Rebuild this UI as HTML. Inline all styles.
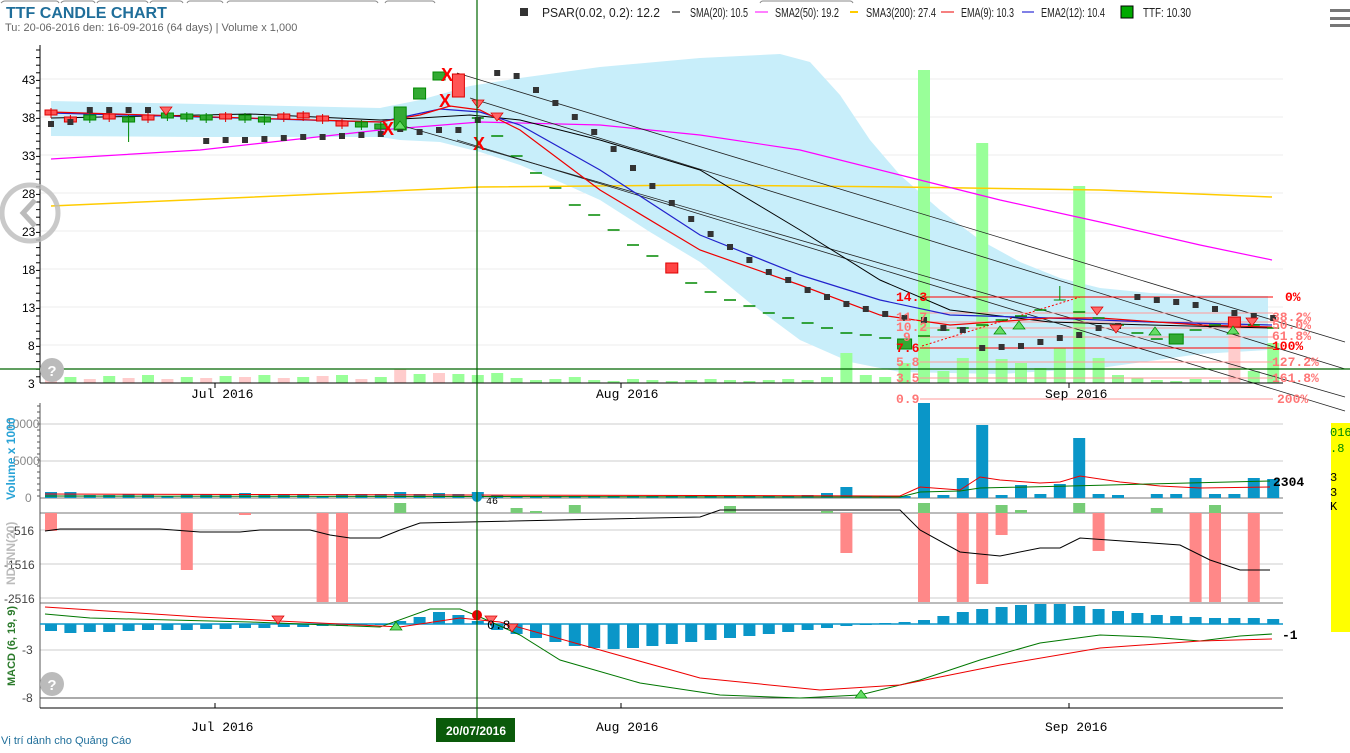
<!DOCTYPE html>
<html><head><meta charset="utf-8"><style>
body{margin:0;background:#fff;width:1350px;height:753px;overflow:hidden;position:relative;font-family:"Liberation Sans",sans-serif}
svg{position:absolute;left:0;top:0}
.t{font-family:"Liberation Mono",monospace;font-size:13px}
.a{font-family:"Liberation Sans",sans-serif;font-size:12px}
</style></head><body>
<svg id="s" width="1350" height="753" xmlns="http://www.w3.org/2000/svg">
<g stroke="#888" fill="none" stroke-width="1">
<path d="M1 3 Q3 1 5 1 H56 Q58 1 59 3"/><path d="M61 3 Q62 1 65 1 H92 Q94 1 95 3"/><path d="M97 3 Q98 1 100 1 H145 Q147 1 148 3"/><path d="M150 3 Q151 1 153 1 H180 Q182 1 183 3"/><path d="M187 3 Q188 1 190 1 H220 Q222 1 223 3"/><path d="M227 3 Q228 1 230 1 H375 Q377 1 378 3"/><path d="M385 3 Q386 1 388 1 H432 Q434 1 435 3"/><path d="M760 3 Q761 1 763 1 H850 Q852 1 853 3"/>
</g>
<text x="6" y="18" font-family="Liberation Sans" font-weight="bold" font-size="16" fill="#1f6e9a">TTF CANDLE CHART</text>
<text x="5" y="31" font-family="Liberation Sans" font-size="11" fill="#666">Tu: 20-06-2016 den: 16-09-2016 (64 days) | Volume x 1,000</text>
<g font-family="Liberation Sans" font-size="13" fill="#222">
<rect x="520" y="8" width="8" height="8" fill="#333"/><text x="542" y="17" textLength="118" lengthAdjust="spacingAndGlyphs">PSAR(0.02, 0.2): 12.2</text>
<line x1="672" y1="12" x2="680" y2="12" stroke="#000"/><text x="690" y="17" textLength="58" lengthAdjust="spacingAndGlyphs">SMA(20): 10.5</text>
<line x1="755" y1="12" x2="768" y2="12" stroke="#f0f"/><text x="775" y="17" textLength="64" lengthAdjust="spacingAndGlyphs">SMA2(50): 19.2</text>
<line x1="850" y1="12" x2="858" y2="12" stroke="#fc0" stroke-width="2"/><text x="866" y="17" textLength="70" lengthAdjust="spacingAndGlyphs">SMA3(200): 27.4</text>
<line x1="941" y1="12" x2="954" y2="12" stroke="#e00"/><text x="961" y="17" textLength="53" lengthAdjust="spacingAndGlyphs">EMA(9): 10.3</text>
<line x1="1022" y1="12" x2="1034" y2="12" stroke="#00c"/><text x="1041" y="17" textLength="64" lengthAdjust="spacingAndGlyphs">EMA2(12): 10.4</text>
<rect x="1121" y="6" width="12" height="12" fill="#0a0" stroke="#000"/><text x="1143" y="17" textLength="48" lengthAdjust="spacingAndGlyphs">TTF: 10.30</text>
</g>
<g fill="#777"><rect x="1330" y="9" width="20" height="3"/><rect x="1330" y="17" width="20" height="3"/><rect x="1330" y="24" width="20" height="3"/></g>
<g id="main"></g>
<g class="t" font-size="12">
<g class="a">
<text x="22" y="84" fill="#000">43</text><text x="22" y="122" fill="#000">38</text><text x="22" y="160" fill="#000">33</text><text x="22" y="198" fill="#000">28</text><text x="22" y="236" fill="#000">23</text><text x="22" y="274" fill="#000">18</text><text x="22" y="312" fill="#000">13</text><text x="28" y="350" fill="#000">8</text><text x="28" y="388" fill="#000">3</text>
<text x="6" y="428" fill="#888">10000</text><text x="13" y="465" fill="#888">5000</text><text x="25" y="502" fill="#888">0</text>
<text x="10" y="535" fill="#444">-516</text><text x="4" y="569" fill="#444">-1516</text><text x="4" y="603" fill="#444">-2516</text>
<text x="22" y="654" fill="#444">-3</text><text x="22" y="702" fill="#444">-8</text>
</g>
<text x="191" y="398" fill="#000">Jul 2016</text><text x="596" y="398" fill="#000">Aug 2016</text><text x="1045" y="398" fill="#000">Sep 2016</text>
<text x="191" y="731" fill="#000">Jul 2016</text><text x="596" y="731" fill="#000">Aug 2016</text><text x="1045" y="731" fill="#000">Sep 2016</text>
<g font-weight="bold" font-size="13">
<text x="896" y="301" fill="#f00">14.3</text><text x="896" y="321" fill="#f77">11.7</text><text x="896" y="331" fill="#f77">10.2</text><text x="903" y="341" fill="#f77">9</text><text x="896" y="352" fill="#f00">7.6</text><text x="896" y="366" fill="#f77">5.8</text><text x="896" y="382" fill="#f77">3.5</text><text x="896" y="403" fill="#f77">0.9</text>
<text x="1285" y="301" fill="#f00">0%</text><text x="1272" y="321" fill="#f77">38.2%</text><text x="1272" y="329" fill="#f77">50.0%</text><text x="1272" y="340" fill="#f77">61.8%</text><text x="1272" y="350" fill="#f00">100%</text><text x="1272" y="366" fill="#f77">127.2%</text><text x="1272" y="382" fill="#f77">161.8%</text><text x="1277" y="403" fill="#f77">200%</text>
</g>
<text x="1273" y="486" fill="#000" font-weight="bold">2304</text><text x="1282" y="639" fill="#000" font-weight="bold">-1</text>
<text x="487" y="629" fill="#000">0.8</text><text x="486" y="504" fill="#000" font-size="10">46</text>
</g>
<text transform="translate(15,500) rotate(-90)" font-family="Liberation Sans" font-weight="bold" font-size="12" fill="#29a3d6">Volume x 1000</text>
<text transform="translate(15,585) rotate(-90)" font-family="Liberation Sans" font-weight="bold" font-size="12" fill="#bbb">NDTNN(20)</text>
<text transform="translate(15,686) rotate(-90)" font-family="Liberation Sans" font-weight="bold" font-size="11" fill="#2a7a2a">MACD (6, 19, 9)</text>
<rect x="436" y="718" width="79" height="24" fill="#0a5a0a"/>
<text x="476" y="735" text-anchor="middle" font-family="Liberation Sans" font-weight="bold" font-size="12" fill="#fff">20/07/2016</text>
<text x="1" y="744" font-family="Liberation Sans" font-size="11" fill="#1f6e9a">Vị trí dành cho Quảng Cáo</text>
<rect x="1331" y="423" width="19" height="209" fill="#ff0"/>
<g font-family="Liberation Mono" font-size="12"><text x="1330" y="436" fill="#080">016</text><text x="1330" y="452" fill="#080">.8</text><text x="1330" y="481" fill="#000">3</text><text x="1330" y="496" fill="#000">3</text><text x="1330" y="510" fill="#000">K</text></g>
<circle cx="30" cy="213" r="28" fill="none" stroke="#bbb" stroke-width="5" opacity=".8"/>
<path d="M35 200 L23 213 L35 226" fill="none" stroke="#bbb" stroke-width="5"/>
<circle cx="52" cy="370" r="12" fill="#bbb"/><text x="52" y="376" text-anchor="middle" font-family="Liberation Sans" font-weight="bold" font-size="15" fill="#fff">?</text>
<circle cx="52" cy="684" r="12" fill="#bbb"/><text x="52" y="690" text-anchor="middle" font-family="Liberation Sans" font-weight="bold" font-size="15" fill="#fff">?</text>
</svg>
<script>
var g=document.getElementById('main'),h='';
function X(i){return 51+i*19.4}
function r(x,y,w,hh,f,o){h+='<rect x="'+x+'" y="'+y+'" width="'+w+'" height="'+hh+'" fill="'+f+'"'+(o||'')+'/>'}
function l(x1,y1,x2,y2,s,w,o){h+='<line x1="'+x1+'" y1="'+y1+'" x2="'+x2+'" y2="'+y2+'" stroke="'+s+'" stroke-width="'+(w||1)+'"'+(o||'')+'/>'}
function p(pts,s,w,f){h+='<polyline points="'+pts+'" fill="'+(f||'none')+'" stroke="'+s+'" stroke-width="'+(w||1)+'"/>'}
[79,117,155,193,231,269,307,345].forEach(function(y){l(40,y,1283,y,'#eee')});
h+='<polygon points="51,101 200,104 380,108 420,100 470,86 520,78 600,67 700,58 780,54 810,62 840,95 870,140 900,175 940,210 980,240 1020,262 1060,278 1100,288 1150,293 1200,295 1268,296 1268,350 1200,354 1100,368 1000,374 900,372 850,362 800,340 750,303 700,262 650,232 600,200 560,182 520,165 480,152 440,142 400,140 380,137 200,137 51,136" fill="#c8eefa"/>';
var mv=[8,6,4,7,5,8,4,6,5,7,6,8,5,6,7,8,4,6,14,9,10,9,8,10,5,3,4,6,3,2,4,3,2,3,4,3,2,3,4,3,6,30,8,6,20,313,12,25,240,24,20,15,35,197,25,8,5,3,2,4,3,5,12,40];
mv.forEach(function(v,i){var c=(i<22&&i%2==0)||i==61?'#fcc':'#9f9';if(i==61)v=60;r(X(i)-6,383-v,12,v,c)});
p('51,206 300,195 480,187 700,185 900,187 1100,190 1272,197','#fc0',1.5);
p('51,159 200,150 380,130 480,122 600,125 700,135 800,150 900,175 1000,200 1100,222 1200,245 1272,260','#f0f',1.2);
l(457,73,1345,342,'#222',.8);l(470,98,1345,369,'#222',.8);l(400,125,1345,397,'#222',.8);l(457,140,1345,411,'#222',.8);
[[297,'#f00'],[313,'#f99'],[322,'#f99'],[328,'#f99'],[337,'#f99'],[348,'#f00'],[362,'#f99'],[378,'#f99'],[399,'#f99']].forEach(function(a){l(920,a[0],1273,a[0],a[1])});
l(922,346,1080,297,'#f00',1,' stroke-dasharray="2,2"');
p('51,118 250,114 380,120 420,118 470,115 520,120 600,140 700,170 800,230 880,280 950,310 1050,322 1150,325 1272,328','#000',1);
p('51,113 380,122 440,109 480,112 520,125 600,170 700,235 800,275 880,300 950,315 1050,318 1150,322 1272,325','#22c',1.2);
p('51,112 380,122 420,115 450,106 480,110 520,130 600,190 700,250 800,285 880,315 950,325 1050,318 1100,318 1200,325 1272,327','#e00',1.2);
var cy=[113,120,118,117,120,118,116,117,118,117,118,120,117,116,119,124,125,127,118,93,76,85,118,136,156,173,188,205,215,230,245,256,268,283,292,300,306,313,318,323,328,333,335,338,344,336,330,328,325,320,316,310,300,312,318,325,333,339,339,330,325,322,325,328];
cy.forEach(function(y,i){var x=X(i);
 if(i==18){r(x-6,107,12,23,'#3a3',' stroke="#080"');return}
 if(i==19){r(x-6,88,12,11,'#3a3',' stroke="#080"');return}
 if(i==20){r(x-6,72,12,8,'#3a3',' stroke="#080"');return}
 if(i==21){r(x-6,74,12,23,'#f55',' stroke="#d00"');return}
 if(i==32||i==61){r(x-6,y-5,12,10,'#f44',' stroke="#d00"');return}
 if(i==44||i==58){r(x-7,y-5,14,10,'#3a3',' stroke="#080"');return}
 if(i<18){var red=[0,1,3,5,9,12,13,14,15].indexOf(i)>=0;r(x-6,y-3,12,5,red?'#f55':'#3a3',' stroke="'+(red?'#d00':'#080')+'"');l(x,y-5,x,y+(i==4?22:5),red?'#d00':'#080');return}
 if(i==52){l(x-6,300,x+6,300,'#080');l(x,286,x,300,'#080');return}
 l(x-6,y,x+6,y,'#080',1.5);});
var ps=[124,122,110,110,110,110,null,null,141,140,140,139,138,137,137,136,135,134,129,132,130,130,120,73,76,90,103,117,132,149,168,186,203,219,234,247,260,272,280,290,297,304,309,314,318,320,328,330,348,347,346,342,338,335,328,326,297,300,302,305,309,313,316,318];
ps.forEach(function(y,i){if(y)r(X(i)-3,y-3,6,6,'#333')});
[[388,128],[447,74],[445,100],[479,143]].forEach(function(a){h+='<text x="'+a[0]+'" y="'+(a[1]+7)+'" text-anchor="middle" font-family="Liberation Sans" font-weight="bold" font-size="18" fill="#f00">X</text>'});
function tri(x,y,up,c){h+='<polygon points="'+(up?(x-6)+','+(y+4)+' '+x+','+(y-4)+' '+(x+6)+','+(y+4):(x-6)+','+(y-4)+' '+x+','+(y+4)+' '+(x+6)+','+(y-4))+'" fill="'+c+'" stroke="'+(up?'#080':'#d00')+'" stroke-width=".7"/>'}
[[166,111],[478,104],[497,117],[1097,311],[1116,329],[1252,322]].forEach(function(a){tri(a[0],a[1],0,'#f66')});
[[400,125],[1000,330],[1019,325],[1233,330],[1155,331]].forEach(function(a){tri(a[0],a[1],1,'#6d6')});
l(40,45,40,383,'#000');l(40,383,1283,383,'#000');for(var y=50;y<383;y+=7.6)l(36,y,40,y,'#000');
l(215,383,215,388,'#000');l(621,383,621,388,'#000');l(1069,383,1069,388,'#000');
l(0,369,1350,369,'#060',1.2);
[424,461].forEach(function(y){l(40,y,1283,y,'#ccc')});l(40,498,1283,498,'#777');
[530,564,598].forEach(function(y){l(40,y,1283,y,'#ccc')});l(40,513,1283,513,'#777');l(40,603,1283,603,'#777');
l(40,650,1283,650,'#ccc');l(40,698,1283,698,'#555');
l(40,403,40,708,'#555');l(40,708,1283,708,'#000');[215,621,1069].forEach(function(x){l(x,703,x,708,'#000')});
for(var y=406;y<498;y+=6)l(37,y,40,y,'#555');
var vb=[6,6,3,3,4,4,2,4,4,4,5,4,4,4,2,4,4,4,6,4,5,4,6,3,2,2,2,2,2,2,2,2,2,2,2,2,2,2,2,3,5,11,2,2,2,95,3,20,73,3,13,4,14,60,4,3,0,4,4,20,4,4,20,19];
vb.forEach(function(v,i){if(v)r(X(i)-6,498-v,12,v,'#0a96c8')});
p('45,494 900,496 920,487 960,490 980,477 1000,480 1040,483 1060,482 1080,476 1120,482 1160,486 1200,488 1270,487','#e00',1);
p('45,496 900,497 920,492 960,491 980,488 1070,486 1270,481','#070',1);
[[0,531],[7,570],[10,515],[14,602],[15,602],[41,553],[45,602],[47,602],[48,584],[49,535],[54,551],[59,602],[60,602],[62,602]].forEach(function(a){r(X(a[0])-6,513,12,a[1]-513,'#f88')});
[[18,503],[24,508],[25,511],[27,505],[35,506],[40,511],[45,503],[49,505],[50,510],[53,503],[57,508],[60,505]].forEach(function(a){r(X(a[0])-6,a[1],12,513-a[1],'#7c7')});
p('45,531 60,529 160,529 200,532 240,532 260,530 310,530 330,535 350,538 380,538 400,530 420,523 700,517 720,510 900,510 920,530 960,552 1000,556 1040,548 1060,548 1080,538 1180,545 1210,560 1240,570 1270,570','#000',1);
var mb=[7,9,8,8,7,6,6,6,5,5,4,4,3,3,2,2,1,1,-3,-7,-12,-9,-3,6,10,14,18,22,24,25,24,22,20,18,16,14,12,10,8,6,4,2,1,-1,-2,-4,-8,-12,-15,-17,-19,-20,-20,-18,-15,-13,-11,-9,-8,-7,-6,-6,-6,-5];
mb.forEach(function(v,i){if(v>0)r(X(i)-6,624,12,v,'#0a96c8');else r(X(i)-6,624+v,12,-v,'#0a96c8')});
l(40,624,1283,624,'#0a96c8',1.5);
p('45,614 90,618 250,622 380,627 430,609 460,609 480,617 520,635 560,660 640,683 720,695 800,698 860,695 920,680 980,660 1040,643 1100,635 1150,637 1200,641 1240,636 1272,634','#070',1);
p('45,607 200,617 400,627 460,618 500,622 600,650 700,678 820,690 900,685 1000,665 1100,648 1200,641 1272,639','#e00',1);
tri(278,620,0,'#f66');tri(491,620,0,'#f66');tri(512,628,0,'#f66');tri(396,626,1,'#6d6');tri(861,694,1,'#6d6');
h+='<circle cx="477" cy="615" r="5" fill="#e00"/><circle cx="477" cy="497" r="5" fill="#0a96c8"/>';
l(477,0,477,718,'#060',1.2);
g.innerHTML=h;
</script>
</body></html>
